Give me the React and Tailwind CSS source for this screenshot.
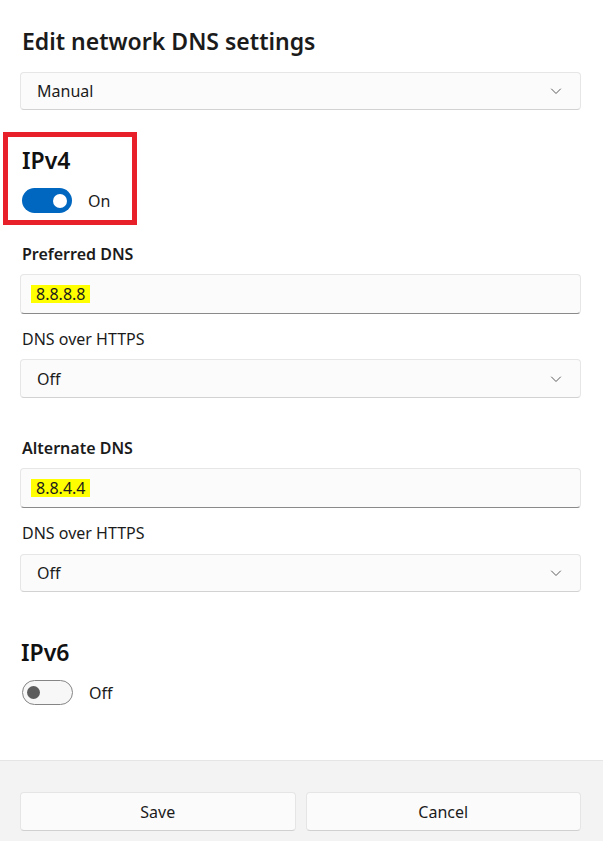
import React from 'react';

const font = { fontFamily: '"Segoe UI", "Noto Sans", "Open Sans", sans-serif' };

function Chevron() {
  return (
    <svg width="12" height="12" viewBox="0 0 12 12" fill="none">
      <path d="M1.5 4 L6 8.5 L10.5 4" stroke="#5c5c5c" strokeWidth="1" strokeLinecap="round" strokeLinejoin="round" />
    </svg>
  );
}

function Select({ value, className = '' }) {
  return (
    <div className={`flex items-center justify-between h-[38px] pl-[16px] pr-[18px] bg-[#fbfbfb] border border-[#e6e6e6] border-b-[#d2d2d2] rounded-[4px] text-[16px] text-[#1b1b1b] ${className}`}>
      <span>{value}</span>
      <Chevron />
    </div>
  );
}

function DnsInput({ value }) {
  return (
    <div className="flex items-center h-[40px] pl-[10px] bg-[#fbfbfb] border border-[#e6e6e6] border-b-[#8a8a8a] rounded-[4px] text-[16px] text-[#1b1b1b]">
      <span className="bg-[#ffff00] px-[5px] leading-[17px] pt-[1px]">{value}</span>
    </div>
  );
}

function Toggle({ on, label }) {
  return (
    <div className="flex items-center gap-[16px]">
      {on ? (
        <div className="w-[50px] h-[25px] rounded-full bg-[#0067c0] flex items-center justify-end pr-[5px]">
          <div className="w-[14px] h-[14px] rounded-full bg-white" />
        </div>
      ) : (
        <div className="w-[51px] h-[25px] rounded-full border-[1.5px] border-[#858585] bg-[#f7f7f7] flex items-center pl-[4px]">
          <div className="w-[13px] h-[13px] rounded-full bg-[#5d5d5d]" />
        </div>
      )}
      <span className="text-[16px] text-[#1b1b1b]">{label}</span>
    </div>
  );
}

export default function App() {
  return (
    <div style={font} className="w-[603px] h-[841px] bg-white flex flex-col overflow-hidden">
      <div className="flex-1 pl-[20px] pr-[22px] pt-[25px]">
        <h1 className="pl-[2px] text-[23px] leading-[32px] font-semibold text-[#1b1b1b]">Edit network DNS settings</h1>

        <Select value="Manual" className="mt-[15px]" />

        {/* IPv4 box */}
        <div className="mt-[22px] ml-[-17px] w-[134px] border-[5px] border-[#e8202a] pl-[14px] pt-[7px] pb-[7px]">
          <div className="text-[23px] leading-[32px] font-semibold text-[#111]">IPv4</div>
          <div className="mt-[12px]">
            <Toggle on label="On" />
          </div>
        </div>

        <div className="mt-[17px] pl-[2px] text-[16px] leading-[24px] font-semibold text-[#1b1b1b]">Preferred DNS</div>
        <div className="mt-[8px]">
          <DnsInput value="8.8.8.8" />
        </div>
        <div className="mt-[13px] pl-[2px] text-[16px] leading-[24px] text-[#1b1b1b]">DNS over HTTPS</div>
        <Select value="Off" className="mt-[8px] h-[39px]" />

        <div className="mt-[38px] pl-[2px] text-[16px] leading-[24px] font-semibold text-[#1b1b1b]">Alternate DNS</div>
        <div className="mt-[8px]">
          <DnsInput value="8.8.4.4" />
        </div>
        <div className="mt-[13px] pl-[2px] text-[16px] leading-[24px] text-[#1b1b1b]">DNS over HTTPS</div>
        <Select value="Off" className="mt-[9px]" />

        <div className="mt-[44px] pl-[1px] text-[23px] leading-[32px] font-semibold text-[#111]">IPv6</div>
        <div className="mt-[12px] pl-[2px]">
          <Toggle label="Off" />
        </div>
      </div>

      {/* footer */}
      <div className="h-[81px] bg-[#f3f3f3] border-t border-[#e5e5e5] flex gap-[10px] pl-[20px] pr-[22px] pt-[31px]">
        <button className="flex-1 h-[39px] bg-[#fbfbfb] border border-[#e5e5e5] border-b-[#d0d0d0] rounded-[4px] text-[16px] text-[#1b1b1b]">Save</button>
        <button className="flex-1 h-[39px] bg-[#fbfbfb] border border-[#e5e5e5] border-b-[#d0d0d0] rounded-[4px] text-[16px] text-[#1b1b1b]">Cancel</button>
      </div>
    </div>
  );
}
